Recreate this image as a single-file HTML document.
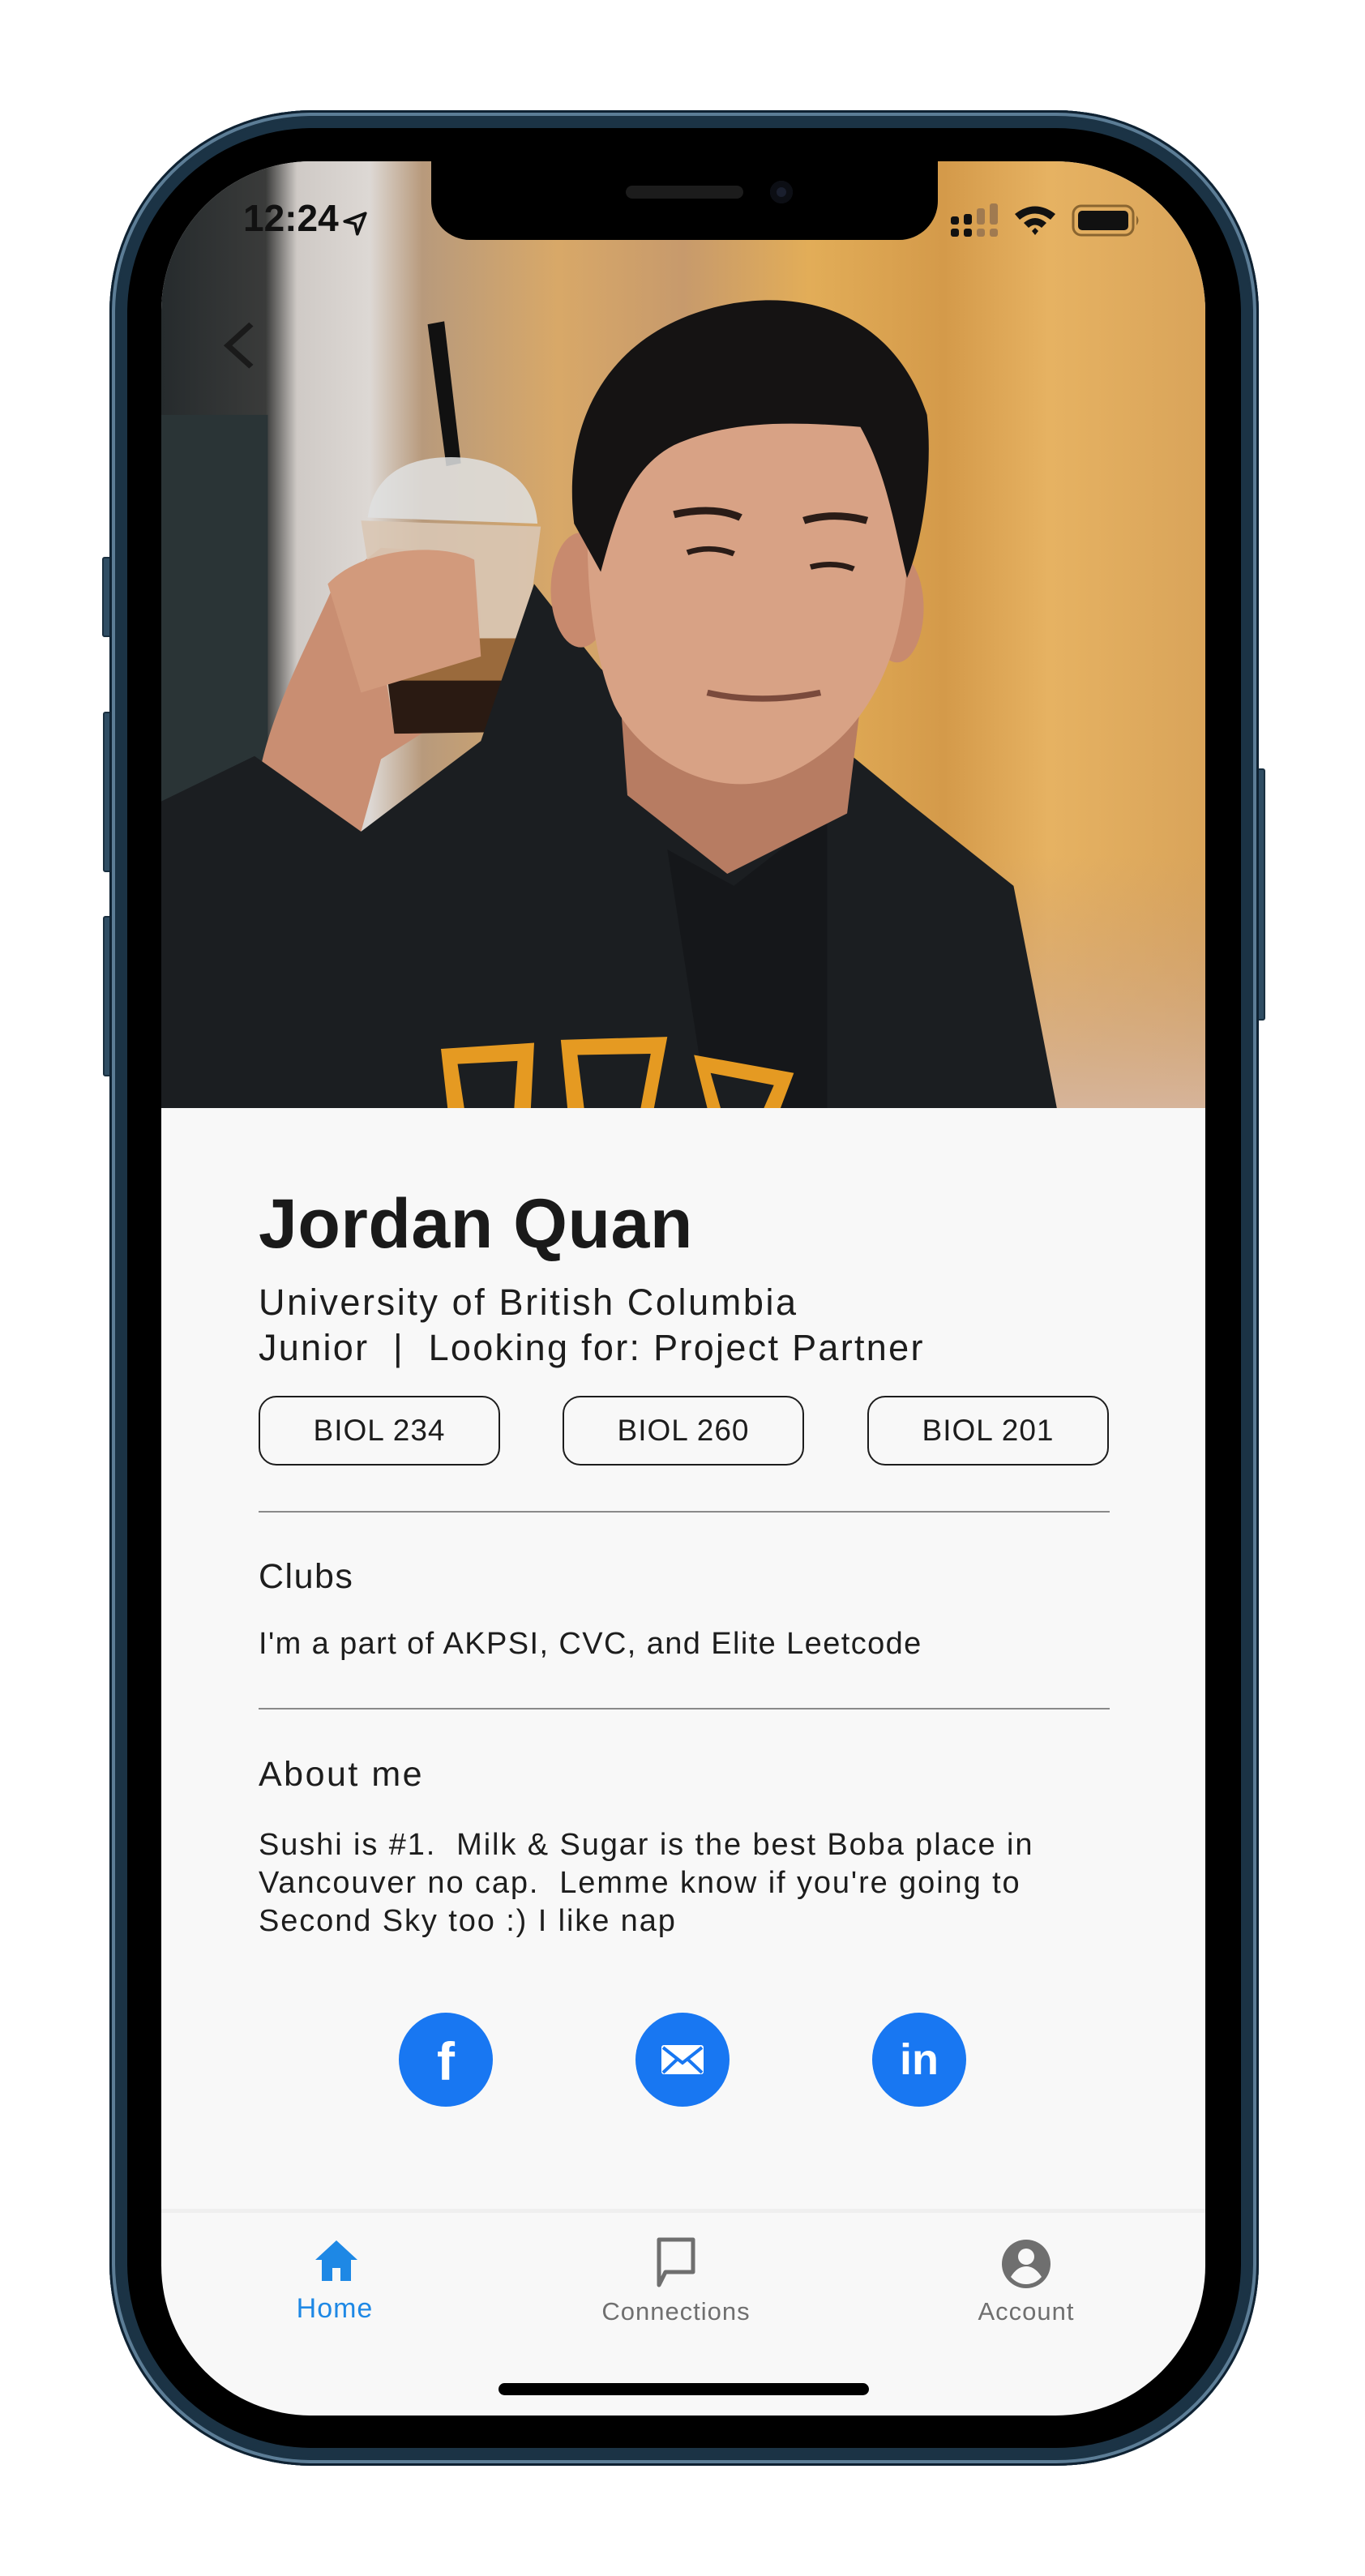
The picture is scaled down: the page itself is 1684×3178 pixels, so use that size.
<!DOCTYPE html>
<html><head><meta charset="utf-8"><style>
*{margin:0;padding:0;box-sizing:border-box}
body{width:1684px;height:3178px;background:#fff;position:relative;overflow:hidden;font-family:"Liberation Sans",sans-serif}
.abs{position:absolute}
.frame{left:135px;top:136px;width:1418px;height:2906px;border-radius:250px;background:#1b3345;box-shadow:inset 0 0 0 3px #0f2232,inset 0 0 0 7px #5c7d96,inset 0 0 0 10px #1b3345}
.bezel{left:157px;top:158px;width:1374px;height:2862px;border-radius:228px;background:#000}
.screen{left:199px;top:199px;width:1288px;height:2781px;border-radius:185px;background:#f8f8f8;overflow:hidden}
.btn{background:#2f4d63;border:2px solid #1a3040;border-radius:3px}
.notch{left:532px;top:196px;width:625px;height:100px;background:#000;border-radius:0 0 48px 48px}
.t{position:absolute;color:#1d1d1d;white-space:nowrap}
.chip{position:absolute;top:1523px;width:298px;height:86px;border:2.5px solid #1d1d1d;border-radius:22px;font-size:37px;text-align:center;line-height:81px;color:#1d1d1d;letter-spacing:1px}
.hr{position:absolute;left:319px;width:1050px;height:2px;background:#8a8a8a}
.soc{position:absolute;top:2284px;width:116px;height:116px;border-radius:50%;background:#1877f2}
.lab{position:absolute;top:2635px;font-size:31px;text-align:center;width:260px;letter-spacing:1px}
</style></head><body>
<div class="abs btn" style="left:126px;top:687px;width:12px;height:99px"></div>
<div class="abs btn" style="left:127px;top:878px;width:11px;height:198px"></div>
<div class="abs btn" style="left:127px;top:1130px;width:11px;height:198px"></div>
<div class="abs btn" style="left:1550px;top:948px;width:11px;height:311px"></div>
<div class="abs frame"></div>
<div class="abs bezel"></div>
<div class="abs screen">
<svg class="abs" style="left:0;top:0" width="1288" height="1168" viewBox="0 0 1568 1568" preserveAspectRatio="none">
<defs>
<linearGradient id="bg" x1="0" x2="1" y1="0" y2="0">
<stop offset="0" stop-color="#262b2d"/><stop offset="0.1" stop-color="#3a3b3a"/><stop offset="0.13" stop-color="#cfcac6"/><stop offset="0.2" stop-color="#ddd8d4"/><stop offset="0.25" stop-color="#b89a7c"/><stop offset="0.38" stop-color="#d8a868"/><stop offset="0.5" stop-color="#c79a6c"/><stop offset="0.62" stop-color="#e2ad58"/><stop offset="0.75" stop-color="#d49a4a"/><stop offset="0.85" stop-color="#e6b262"/><stop offset="1" stop-color="#d9a45a"/>
</linearGradient>
<linearGradient id="fl" x1="0" x2="0" y1="0" y2="1"><stop offset="0" stop-color="#c99a70" stop-opacity="0"/><stop offset="1" stop-color="#d6b49a"/></linearGradient>
</defs>
<rect width="1568" height="1568" fill="url(#bg)"/>
<rect x="1100" y="1150" width="468" height="418" fill="url(#fl)"/>
<rect x="0" y="420" width="160" height="700" fill="#2a3436"/>
<path d="M150,1000 C170,900 220,800 260,700 L330,640 L470,650 L480,760 L460,900 L330,990 L300,1110 Z" fill="#c98e72"/>
<path d="M400,270 L425,265 L450,500 L428,505 Z" fill="#111"/>
<path d="M310,590 C320,510 380,490 435,490 C500,490 560,520 565,600 Z" fill="#dfe0e0" opacity="0.85"/>
<path d="M300,595 L570,605 L530,940 L350,945 Z" fill="#d9c6b4" opacity="0.9"/>
<path d="M335,790 L540,790 L530,940 L350,945 Z" fill="#9a6a3c"/>
<path d="M340,860 L535,860 L530,945 L350,948 Z" fill="#2a1a12"/>
<path d="M250,700 C300,640 420,630 470,660 L480,820 L300,880 Z" fill="#d29a7c"/>
<path d="M0,1060 L140,985 L300,1110 L480,960 L560,700 L660,840 L830,1010 L1010,960 L1120,1060 L1280,1200 L1345,1568 L0,1568 Z" fill="#1b1e21"/>
<path d="M760,1140 L860,1200 L1000,1080 L1000,1568 L820,1568 Z" fill="#15171a"/>
<path d="M690,900 L1050,900 L1030,1080 L850,1180 L700,1050 Z" fill="#b77c62"/>
<ellipse cx="630" cy="710" rx="45" ry="95" fill="#c88a6e"/>
<ellipse cx="1105" cy="740" rx="40" ry="90" fill="#c88a6e"/>
<path d="M640,620 C640,430 760,360 880,370 C1040,380 1120,460 1120,640 C1120,820 1060,960 930,1020 C830,1060 720,990 680,900 C650,820 640,720 640,620 Z" fill="#d8a285"/>
<path d="M620,600 C600,420 680,270 860,235 C1000,210 1110,280 1150,420 C1160,520 1140,640 1120,690 C1100,600 1090,520 1050,440 C940,430 850,430 770,470 C700,510 680,600 660,680 Z" fill="#151313"/>
<path d="M770,585 Q830,570 870,590" stroke="#2a1c17" stroke-width="12" fill="none"/>
<path d="M965,595 Q1010,580 1060,595" stroke="#2a1c17" stroke-width="12" fill="none"/>
<path d="M790,648 Q825,635 860,650" stroke="#2a1c17" stroke-width="9" fill="none"/>
<path d="M975,672 Q1010,662 1040,675" stroke="#2a1c17" stroke-width="9" fill="none"/>
<path d="M820,880 Q900,900 990,880" stroke="#7a4a3c" stroke-width="10" fill="none"/>
<path d="M420,1470 L560,1460 L555,1568 L430,1568 Z M600,1455 L760,1450 L740,1568 L610,1568 Z M800,1480 L950,1510 L930,1568 L820,1568 Z" fill="#e59a22"/>
<path d="M445,1495 L535,1490 L530,1568 L455,1568 Z M625,1480 L735,1478 L720,1568 L635,1568 Z M825,1510 L920,1530 L905,1568 L840,1568 Z" fill="#1b1e21"/>
<path d="M135,270 L100,305 L135,340" stroke="#1a1a1a" stroke-width="9" fill="none"/>
</svg>
<div class="t" style="left:101px;top:43px;font-size:46px;font-weight:bold;color:#111">12:24</div>
<svg class="abs" style="left:222px;top:60px" width="34" height="34" viewBox="0 0 24 24"><path d="M21 3 L3 10 L12 12 L14 21 Z" fill="none" stroke="#111" stroke-width="2.6" stroke-linejoin="round"/></svg>
<svg class="abs" style="left:974px;top:52px" width="240" height="50" viewBox="0 0 240 50">
<rect x="0" y="16" width="10" height="10" rx="3" fill="#111"/><rect x="16" y="13" width="10" height="13" rx="3" fill="#111"/>
<rect x="0" y="31" width="10" height="10" rx="3" fill="#111"/><rect x="16" y="31" width="10" height="10" rx="3" fill="#111"/>
<rect x="32" y="6" width="10" height="20" rx="3" fill="#a07a50"/><rect x="48" y="0" width="10" height="26" rx="3" fill="#a07a50"/>
<rect x="32" y="31" width="10" height="10" rx="3" fill="#a07a50"/><rect x="48" y="31" width="10" height="10" rx="3" fill="#a07a50"/>
<path d="M79,13 Q104,-6 129,13 L123,20 Q104,5 85,20 Z M90,24 Q104,12 118,24 L112,30 Q104,23 96,30 Z M100,34 L104,30 L108,34 L104,39 Z" fill="#111"/>
<rect x="151" y="3" width="74" height="36" rx="10" fill="none" stroke="#8a6530" stroke-width="3"/>
<rect x="157" y="9" width="62" height="24" rx="5" fill="#111"/>
<path d="M229,15 Q234,21 229,27 Z" fill="#8a6530"/>
</svg>
<div class="t" style="left:120px;top:1262px;font-size:86px;font-weight:bold;color:#1a1a1a;letter-spacing:0.5px">Jordan Quan</div>
<div class="t" style="left:120px;top:1382px;font-size:45px;letter-spacing:2.6px">University of British Columbia</div>
<div class="t" style="left:120px;top:1438px;font-size:45px;letter-spacing:2.3px">Junior &nbsp;| &nbsp;Looking for: Project Partner</div>
<div class="chip" style="left:120px">BIOL 234</div>
<div class="chip" style="left:495px">BIOL 260</div>
<div class="chip" style="left:871px">BIOL 201</div>
<div class="hr" style="left:120px;top:1665px"></div>
<div class="t" style="left:120px;top:1722px;font-size:43px;letter-spacing:1.5px">Clubs</div>
<div class="t" style="left:120px;top:1808px;font-size:38px;letter-spacing:1.4px">I'm a part of AKPSI, CVC, and Elite Leetcode</div>
<div class="hr" style="left:120px;top:1908px"></div>
<div class="t" style="left:120px;top:1966px;font-size:43px;letter-spacing:2.5px">About me</div>
<div class="t" style="left:120px;top:2054px;font-size:38px;line-height:47px;white-space:pre;letter-spacing:1.9px">Sushi is #1.  Milk &amp; Sugar is the best Boba place in
Vancouver no cap.  Lemme know if you're going to
Second Sky too :) I like nap</div>
<div class="soc" style="left:293px"><div class="t" style="left:0;width:116px;top:22px;text-align:center;color:#fff;font-size:66px;font-weight:bold">f</div></div>
<div class="soc" style="left:585px"><svg class="abs" style="left:30px;top:38px" width="56" height="40" viewBox="0 0 56 40"><rect x="2" y="2" width="52" height="36" rx="3" fill="#fff"/><path d="M4,5 L28,24 L52,5 M4,36 L22,19 M52,36 L34,19" stroke="#1877f2" stroke-width="4" fill="none"/></svg></div>
<div class="soc" style="left:877px"><div class="t" style="left:0;width:116px;top:27px;text-align:center;color:#fff;font-size:54px;font-weight:bold">in</div></div>
<div class="abs" style="left:0;top:2526px;width:1288px;height:5px;background:#efefef"></div>
<svg class="abs" style="left:188px;top:2563px" width="56" height="54" viewBox="0 0 56 54"><path d="M28,2 L54,26 L46,26 L46,52 L33,52 L33,36 L23,36 L23,52 L10,52 L10,26 L2,26 Z" fill="#1e88e5"/></svg>
<div class="lab" style="left:84px;color:#1e88e5;font-size:34px;top:2630px">Home</div>
<svg class="abs" style="left:610px;top:2560px" width="50" height="64" viewBox="0 0 50 64"><path d="M4,4 L46,4 L46,44 L12,44 L4,60 Z" fill="none" stroke="#6f6f6f" stroke-width="5" stroke-linejoin="round"/></svg>
<div class="lab" style="left:505px;color:#6f6f6f">Connections</div>
<svg class="abs" style="left:1036px;top:2563px" width="62" height="62" viewBox="0 0 62 62"><circle cx="31" cy="31" r="30" fill="#6f6f6f"/><circle cx="31" cy="22" r="10" fill="#f8f8f8"/><path d="M12,47 Q20,34 31,34 Q42,34 50,47 Q42,56 31,56 Q20,56 12,47 Z" fill="#f8f8f8"/></svg>
<div class="lab" style="left:937px;color:#6f6f6f">Account</div>
<div class="abs" style="left:416px;top:2741px;width:457px;height:15px;border-radius:8px;background:#000"></div>
</div>
<div class="abs notch"><div class="abs" style="left:240px;top:33px;width:145px;height:16px;border-radius:8px;background:#1c1c1c"></div><div class="abs" style="left:418px;top:27px;width:28px;height:28px;border-radius:50%;background:#1a1f2e;box-shadow:inset 0 0 0 8px #0c0e14"></div></div>
</body></html>
